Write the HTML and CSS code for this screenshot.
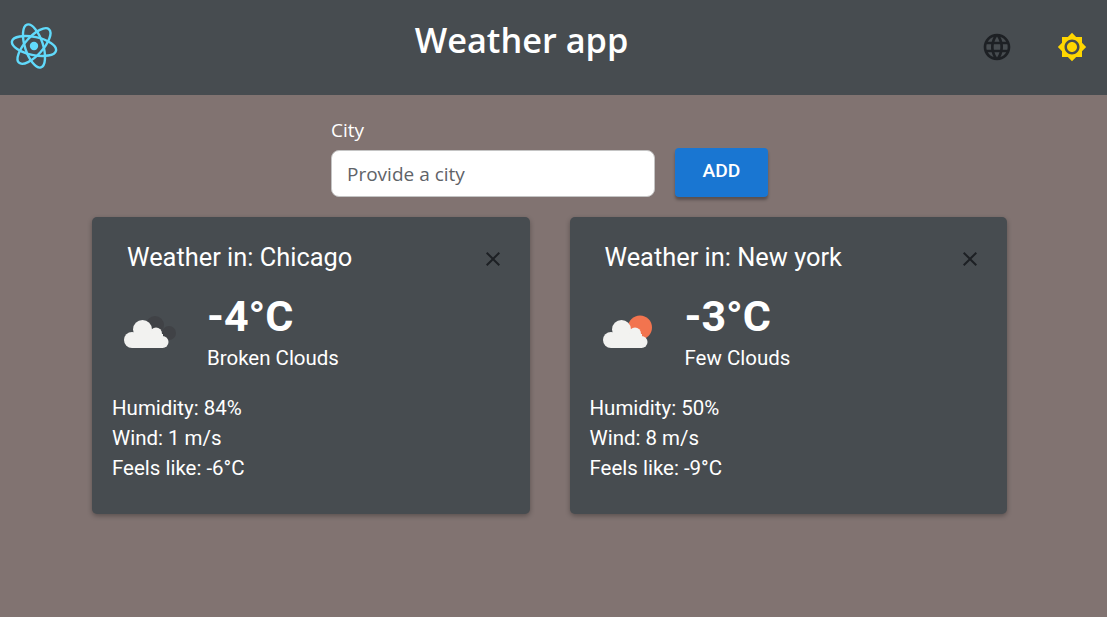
FILE: index.html
```html
<!DOCTYPE html>
<html lang="en">
<head>
    <meta charset="UTF-8">
    <meta name="viewport" content="width=device-width, initial-scale=1.0">
    <title>Weather app</title>
    <link rel="stylesheet" href="styles.css">
</head>
<body>
    <header class="app-header">
        <svg class="logo" viewBox="0 0 48 48" fill="none" stroke="#61dafb" stroke-width="2.4">
            <g transform="rotate(12 24 24)">
                <ellipse cx="24" cy="24" rx="22.500" ry="9"/>
                <ellipse cx="24" cy="24" rx="22.500" ry="9" transform="rotate(60 24 24)"/>
                <ellipse cx="24" cy="24" rx="22.500" ry="9" transform="rotate(120 24 24)"/>
            </g>
            <circle cx="24" cy="24" r="4.2" fill="#61dafb" stroke="none"/>
        </svg>
        <h1 class="app-title">Weather app</h1>
        <div class="header-actions">
            <svg class="icon-language" viewBox="0 0 24 24"><path d="M11.99 2C6.47 2 2 6.48 2 12s4.47 10 9.99 10C17.52 22 22 17.52 22 12S17.52 2 11.99 2zm6.93 6h-2.95c-.32-1.25-.78-2.45-1.38-3.56 1.84.63 3.37 1.91 4.33 3.56zM12 4.04c.83 1.2 1.48 2.53 1.91 3.96h-3.82c.43-1.43 1.08-2.76 1.91-3.96zM4.26 14C4.1 13.36 4 12.69 4 12s.1-1.36.26-2h3.38c-.08.66-.14 1.32-.14 2 0 .68.06 1.34.14 2H4.26zm.82 2h2.95c.32 1.25.78 2.45 1.38 3.56-1.84-.63-3.37-1.9-4.33-3.56zm2.95-8H5.08c.96-1.66 2.49-2.93 4.33-3.56C8.81 5.55 8.35 6.75 8.03 8zM12 19.96c-.83-1.2-1.48-2.53-1.91-3.96h3.82c-.43 1.43-1.08 2.76-1.91 3.96zM14.34 14H9.66c-.09-.66-.16-1.32-.16-2 0-.68.07-1.35.16-2h4.68c.09.65.16 1.32.16 2 0 .68-.07 1.34-.16 2zm.25 5.56c.6-1.11 1.06-2.31 1.38-3.56h2.95c-.96 1.65-2.49 2.93-4.33 3.56zM16.36 14c.08-.66.14-1.32.14-2 0-.68-.06-1.34-.14-2h3.38c.16.64.26 1.31.26 2s-.1 1.36-.26 2h-3.38z"/></svg>
            <svg class="icon-theme" viewBox="0 0 24 24"><path d="M20 8.69V4h-4.69L12 .69 8.69 4H4v4.69L.69 12 4 15.31V20h4.69L12 23.31 15.31 20H20v-4.69L23.31 12 20 8.69zM12 18c-3.31 0-6-2.69-6-6s2.69-6 6-6 6 2.69 6 6-2.69 6-6 6zm0-10c-2.21 0-4 1.79-4 4s1.79 4 4 4 4-1.79 4-4-1.79-4-4-4z"/></svg>
        </div>
    </header>

    <form class="city-form">
        <div class="city-field">
            <label class="city-label" for="city">City</label>
            <input class="city-input" type="text" id="city" placeholder="Provide a city">
        </div>
        <button class="add-button" type="button">ADD</button>
    </form>

    <main class="cards">
        <section class="card">
            <div class="card-head">
                <h2 class="card-title">Weather in: Chicago</h2>
                <svg class="icon-close" viewBox="0 0 24 24"><path d="M19 6.41L17.59 5 12 10.59 6.41 5 5 6.41 10.59 12 5 17.59 6.41 19 12 13.41 17.59 19 19 17.59 13.41 12z"/></svg>
            </div>
            <div class="card-now">
                <svg class="weather-icon" viewBox="0 0 80 54">
                    <g fill="#404246">
                        <circle cx="43" cy="21" r="9"/>
                        <circle cx="57" cy="29" r="7"/>
                    </g>
                    <g fill="#f2f2f0">
                        <circle cx="30.500" cy="25.500" r="9.500"/>
                        <circle cx="44" cy="29.500" r="6"/>
                        <circle cx="20" cy="36" r="8"/>
                        <circle cx="50.500" cy="38" r="6"/>
                        <rect x="20" y="30" width="31" height="14"/>
                    </g>
                </svg>
                <div>
                    <div class="temp">-4°C</div>
                    <div class="desc">Broken Clouds</div>
                </div>
            </div>
            <ul class="details">
                <li>Humidity: 84%</li>
                <li>Wind: 1 m/s</li>
                <li>Feels like: -6°C</li>
            </ul>
        </section>

        <section class="card">
            <div class="card-head">
                <h2 class="card-title">Weather in: New york</h2>
                <svg class="icon-close" viewBox="0 0 24 24"><path d="M19 6.41L17.59 5 12 10.59 6.41 5 5 6.41 10.59 12 5 17.59 6.41 19 12 13.41 17.59 19 19 17.59 13.41 12z"/></svg>
            </div>
            <div class="card-now">
                <svg class="weather-icon" viewBox="0 0 80 54">
                    <circle cx="50" cy="23.500" r="12" fill="#f2744f"/>
                    <g fill="#f2f2f0" transform="translate(1 0)">
                        <circle cx="30.500" cy="25.500" r="9.500"/>
                        <circle cx="44" cy="29.500" r="6"/>
                        <circle cx="20" cy="36" r="8"/>
                        <circle cx="50.500" cy="38" r="6"/>
                        <rect x="20" y="30" width="31" height="14"/>
                    </g>
                </svg>
                <div>
                    <div class="temp">-3°C</div>
                    <div class="desc">Few Clouds</div>
                </div>
            </div>
            <ul class="details">
                <li>Humidity: 50%</li>
                <li>Wind: 8 m/s</li>
                <li>Feels like: -9°C</li>
            </ul>
        </section>
    </main>
</body>
</html>
```

FILE: styles.css
```css
body {
    margin: 0;
    height: 617px;
    overflow: hidden;
    background-color: #817371;
    font-family: Roboto, sans-serif;
    color: white;
}

.app-header {
    display: flex;
    align-items: center;
    justify-content: space-between;
    height: 95px;
    padding: 0 20px 2px 10px;
    background-color: #474c50;
    box-sizing: border-box;
}

.logo {
    width: 48px;
    height: 48px;
    margin-bottom: 2px;
}

.app-title {
    margin: -14px 0 0 0;
    padding-left: 4px;
    font-family: "Open Sans", sans-serif;
    font-size: 34.3px;
    font-weight: 600;
}

.header-actions {
    display: flex;
    align-items: center;
    gap: 44px;
}

.icon-language {
    width: 32px;
    height: 32px;
    fill: #1d2024;
}

.icon-theme {
    width: 30px;
    height: 30px;
    fill: #ffd600;
}

.city-form {
    display: flex;
    align-items: flex-end;
    gap: 20px;
    height: 122px;
    padding: 0 0 20px 331px;
    box-sizing: border-box;
}

.city-label {
    display: block;
    margin-bottom: 7px;
    font-family: "Open Sans", sans-serif;
    font-size: 19px;
}

.city-input {
    display: block;
    width: 324px;
    height: 47px;
    padding: 0 15px;
    border: 1px solid #c4c4c4;
    border-radius: 8px;
    box-sizing: border-box;
    font-family: "Open Sans", sans-serif;
    font-size: 19px;
}

.city-input::placeholder {
    color: #5f6368;
    opacity: 1;
}

.add-button {
    width: 93px;
    height: 49px;
    padding-bottom: 6px;
    border: none;
    border-radius: 4px;
    background-color: #1976d2;
    color: white;
    font-family: Roboto, sans-serif;
    font-size: 19.2px;
    font-weight: 500;
    box-shadow: 0 3px 3px rgba(0, 0, 0, 0.3);
}

.cards {
    display: flex;
    gap: 40px;
    padding-left: 92px;
}

.card {
    width: 437.5px;
    height: 297px;
    padding: 26px 20px 20px;
    box-sizing: border-box;
    background-color: #474c50;
    border-radius: 5px;
    box-shadow: 0 2px 5px rgba(0, 0, 0, 0.3);
}

.card-head {
    display: flex;
    align-items: center;
    justify-content: space-between;
    padding: 0 5px 0 15px;
}

.card-title {
    margin: 0;
    font-size: 25.4px;
    font-weight: 400;
    line-height: 28px;
}

.icon-close {
    width: 24px;
    height: 24px;
    margin-top: 4px;
    fill: #1d2024;
}

.card-now {
    display: flex;
    align-items: center;
    gap: 15px;
    margin-top: 18px;
}

.weather-icon {
    width: 80px;
    height: 54px;
    flex-shrink: 0;
}

.temp {
    font-size: 43px;
    font-weight: 700;
    line-height: 54px;
}

.desc {
    font-size: 20.48px;
    line-height: 30px;
}

.details {
    margin: 20px 0 0 0;
    padding: 0;
    list-style: none;
    font-size: 20.48px;
    line-height: 30px;
}
```
